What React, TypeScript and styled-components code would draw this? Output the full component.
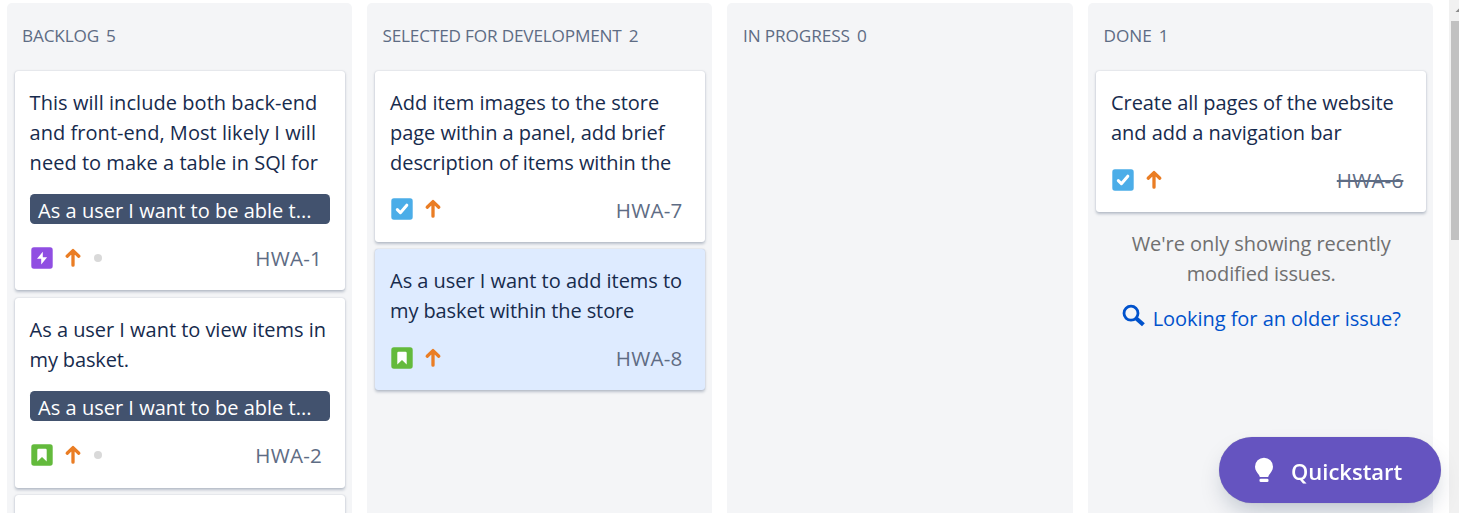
import React from "react";
import styled, { createGlobalStyle, css } from "styled-components";

const GlobalStyle = createGlobalStyle`
  * { box-sizing: border-box; }
  html, body { height: 100%; margin: 0; overflow: hidden; background: #fff; }
  body {
    font-family: "Open Sans", "Noto Sans", sans-serif;
    font-size: 20px;
    line-height: 30px;
    color: #172b4d;
  }
`;

const Page = styled.div`
  display: flex;
  width: 100vw;
  height: 100vh;
`;

const Board = styled.main`
  flex: 1;
  display: grid;
  grid-template-columns: repeat(4, minmax(0, 1fr));
  gap: 15px;
  padding: 3px 15.6px 0 6.5px;
  overflow: hidden;
`;

const Column = styled.section`
  display: flex;
  flex-direction: column;
  gap: 7.5px;
  padding: 0 7px 0 8.1px;
  border-radius: 5px 5px 0 0;
  background: #f4f5f7;
`;

const ColumnHeader = styled.h2`
  display: flex;
  gap: 7px;
  height: 60.5px;
  margin: 0;
  padding: 18px 7.4px 0;
  font-size: 17.2px;
  font-weight: 400;
  line-height: 30px;
  white-space: nowrap;
  color: #5e6c84;
`;

const Spaced = styled.span<{ $spacing?: number }>`
  letter-spacing: ${(p) => p.$spacing ?? 0}px;
`;

const Card = styled.article<{ $selected?: boolean }>`
  flex: none;
  padding: 17px 15px 16.4px;
  border-radius: 3px;
  background: ${(p) => (p.$selected ? "#deebff" : "#fff")};
  box-shadow: 0 1.5px 3px rgba(9, 30, 66, 0.25), 0 0 1px rgba(9, 30, 66, 0.2);
`;

const Summary = styled.div`
  min-height: 60px;
  max-height: 89.75px;
`;

const SummaryLine = styled(Spaced)`
  display: block;
  white-space: nowrap;
`;

const Epic = styled.div`
  height: 30px;
  margin-top: 16.6px;
  padding: 1.5px 8.5px 0;
  border-radius: 4.5px;
  overflow: hidden;
  white-space: nowrap;
  line-height: 30px;
  background: #42526e;
  color: #fff;
`;

const CardFooter = styled.footer`
  display: flex;
  align-items: center;
  height: 32px;
  margin-top: 15.5px;
  ${Epic} + & { margin-top: 17.65px; }
`;

const Icons = styled.div`
  display: flex;
  align-items: center;
  flex: 1;
  padding-left: 1px;
`;

const IssueKey = styled.span<{ $done?: boolean }>`
  padding: 0.5px 8px 0 0;
  color: #5e6c84;
  font-size: 20.6px;
  letter-spacing: 0.2px;
  ${(p) => p.$done && css`
    text-decoration: line-through;
    text-decoration-thickness: 2px;
  `}
`;

const Arrow = styled.svg`
  margin-left: 11px;
`;

const AgeDot = styled.i`
  width: 8px;
  height: 8px;
  margin-left: 12.3px;
  border-radius: 50%;
  background: #d9d9d9;
`;

const Note = styled.p`
  display: flex;
  flex-direction: column;
  align-items: center;
  margin: 9.5px 0 0;
  white-space: nowrap;
  color: #707070;
`;

const OlderLink = styled.a`
  display: flex;
  justify-content: center;
  gap: 8px;
  margin-top: 7.5px;
  white-space: nowrap;
  color: #0052cc;
`;

const ScrollTrack = styled.aside`
  display: flex;
  flex-direction: column;
  align-items: flex-end;
  width: 10px;
  background: #f1f1f1;
`;

const ScrollArrow = styled.svg`
  flex: none;
`;

const ScrollThumb = styled.div`
  width: 8px;
  height: 219px;
  background: #c1c1c1;
`;

const Quickstart = styled.button`
  position: fixed;
  right: 18px;
  bottom: 10px;
  display: flex;
  align-items: center;
  width: 222px;
  height: 66px;
  padding: 0 0 0 35px;
  border: 0;
  border-radius: 33px;
  background: #6554c0;
  color: #fff;
  font: 600 22px/30px "Open Sans", "Noto Sans", sans-serif;
  box-shadow: 0 12px 24px -6px rgba(9, 30, 66, 0.25), 0 0 1px rgba(9, 30, 66, 0.31);
`;

const QuickstartLabel = styled(Spaced)`
  padding: 2px 0 0 17px;
`;

type IssueType = "epic" | "story" | "task";
type Line = [text: string, spacing?: number];

interface Issue {
  id: string;
  type: IssueType;
  lines: Line[];
  epic?: boolean;
  aged?: boolean;
  selected?: boolean;
  done?: boolean;
}

const typeColor: Record<IssueType, string> = {
  epic: "#904ee2",
  story: "#63ba3c",
  task: "#4bade8",
};

function TypeIcon({ type }: { type: IssueType }) {
  return (
    <svg width="22" height="22" viewBox="0 0 22 22">
      <rect x="0.3" y="0.3" width="21.4" height="21.4" rx="2.6" fill={typeColor[type]} />
      {type === "epic" && <path d="M11.8 4.8 6 11.8h4.2v5.6l5.9-7.1h-4.3z" fill="#fff" />}
      {type === "story" && <path d="M6.3 6a1.2 1.2 0 0 1 1.2-1.2h7a1.2 1.2 0 0 1 1.2 1.2v11.4L11 12.9l-4.7 4.5z" fill="#fff" />}
      {type === "task" && (
        <path d="m6.3 11.6 3.1 3.1 6.4-7.5" fill="none" stroke="#fff" strokeWidth="3" strokeLinecap="round" strokeLinejoin="round" />
      )}
    </svg>
  );
}

function PriorityIcon() {
  return (
    <Arrow width="18" height="22" viewBox="0 0 18 22">
      <path d="M9 18.2V3.8M3.2 9.2 9 3.6l5.8 5.6" fill="none" stroke="#ea7d24" strokeWidth="3.3" strokeLinecap="round" strokeLinejoin="round" />
    </Arrow>
  );
}

function IssueCard({ issue }: { issue: Issue }) {
  return (
    <Card $selected={issue.selected}>
      <Summary>
        {issue.lines.map(([text, spacing]) => (
          <SummaryLine key={text} $spacing={spacing}>{text}</SummaryLine>
        ))}
      </Summary>
      {issue.epic && <Epic><Spaced $spacing={0.02}>As a user I want to be able t...</Spaced></Epic>}
      <CardFooter>
        <Icons>
          <TypeIcon type={issue.type} />
          <PriorityIcon />
          {issue.aged && <AgeDot />}
        </Icons>
        <IssueKey $done={issue.done}>{issue.id}</IssueKey>
      </CardFooter>
    </Card>
  );
}

interface ColumnData {
  title: string;
  count: number;
  spacing?: number;
  issues: Issue[];
}

const columns: ColumnData[] = [
  {
    title: "BACKLOG",
    count: 5,
    spacing: -0.15,
    issues: [
      {
        id: "HWA-1", type: "epic", epic: true, aged: true,
        lines: [["This will include both back-end", 0.05], ["and front-end, Most likely I will", 0.04], ["need to make a table in SQl for", 0.03]],
      },
      {
        id: "HWA-2", type: "story", epic: true, aged: true,
        lines: [["As a user I want to view items in", -0.03], ["my basket.", -0.15]],
      },
      { id: "HWA-3", type: "story", lines: [] },
    ],
  },
  {
    title: "SELECTED FOR DEVELOPMENT",
    count: 2,
    spacing: -0.18,
    issues: [
      {
        id: "HWA-7", type: "task",
        lines: [["Add item images to the store"], ["page within a panel, add brief", -0.05], ["description of items within the", -0.07]],
      },
      {
        id: "HWA-8", type: "story", selected: true,
        lines: [["As a user I want to add items to", -0.03], ["my basket within the store", -0.11]],
      },
    ],
  },
  { title: "IN PROGRESS", count: 0, spacing: -0.1, issues: [] },
  {
    title: "DONE",
    count: 1,
    issues: [
      {
        id: "HWA-6", type: "task", done: true,
        lines: [["Create all pages of the website", -0.07], ["and add a navigation bar", -0.04]],
      },
    ],
  },
];

export default function App() {
  return (
    <>
      <GlobalStyle />
      <Page>
        <Board>
          {columns.map((column) => (
            <Column key={column.title}>
              <ColumnHeader>
                <Spaced $spacing={column.spacing}>{column.title}</Spaced>
                <span>{column.count}</span>
              </ColumnHeader>
              {column.issues.map((issue) => <IssueCard key={issue.id} issue={issue} />)}
              {column.title === "DONE" && (
                <>
                  <Note>
                    <Spaced $spacing={-0.06}>We're only showing recently</Spaced>
                    <Spaced $spacing={-0.1}>modified issues.</Spaced>
                  </Note>
                  <OlderLink>
                    <svg width="23" height="24" viewBox="0 0 23 24">
                      <circle cx="9" cy="9.2" r="7" fill="none" stroke="#0052cc" strokeWidth="2.8" />
                      <path d="m13.8 14 7.6 6.8" stroke="#0052cc" strokeWidth="4.2" />
                    </svg>
                    <Spaced $spacing={-0.04}>Looking for an older issue?</Spaced>
                  </OlderLink>
                </>
              )}
            </Column>
          ))}
        </Board>
        <ScrollTrack>
          <ScrollArrow width="8" height="21" viewBox="0 0 8 21">
            <path d="M4.5 12 9.5 7v5z" fill="#8b8b8b" />
          </ScrollArrow>
          <ScrollThumb />
        </ScrollTrack>
      </Page>
      <Quickstart>
        <svg width="20" height="26" viewBox="0 0 20 26">
          <path d="M10 .7a9 9 0 0 0-9 9c0 3.6 2.3 5.8 4 8.2.5.8.7 1.6.8 2.1h8.4c.1-.5.3-1.3.8-2.1 1.7-2.4 4-4.6 4-8.2a9 9 0 0 0-9-9z" fill="#fff" />
          <rect x="5.5" y="21.8" width="9" height="3.2" rx="1.3" fill="#fff" />
        </svg>
        <QuickstartLabel>Quickstart</QuickstartLabel>
      </Quickstart>
    </>
  );
}
